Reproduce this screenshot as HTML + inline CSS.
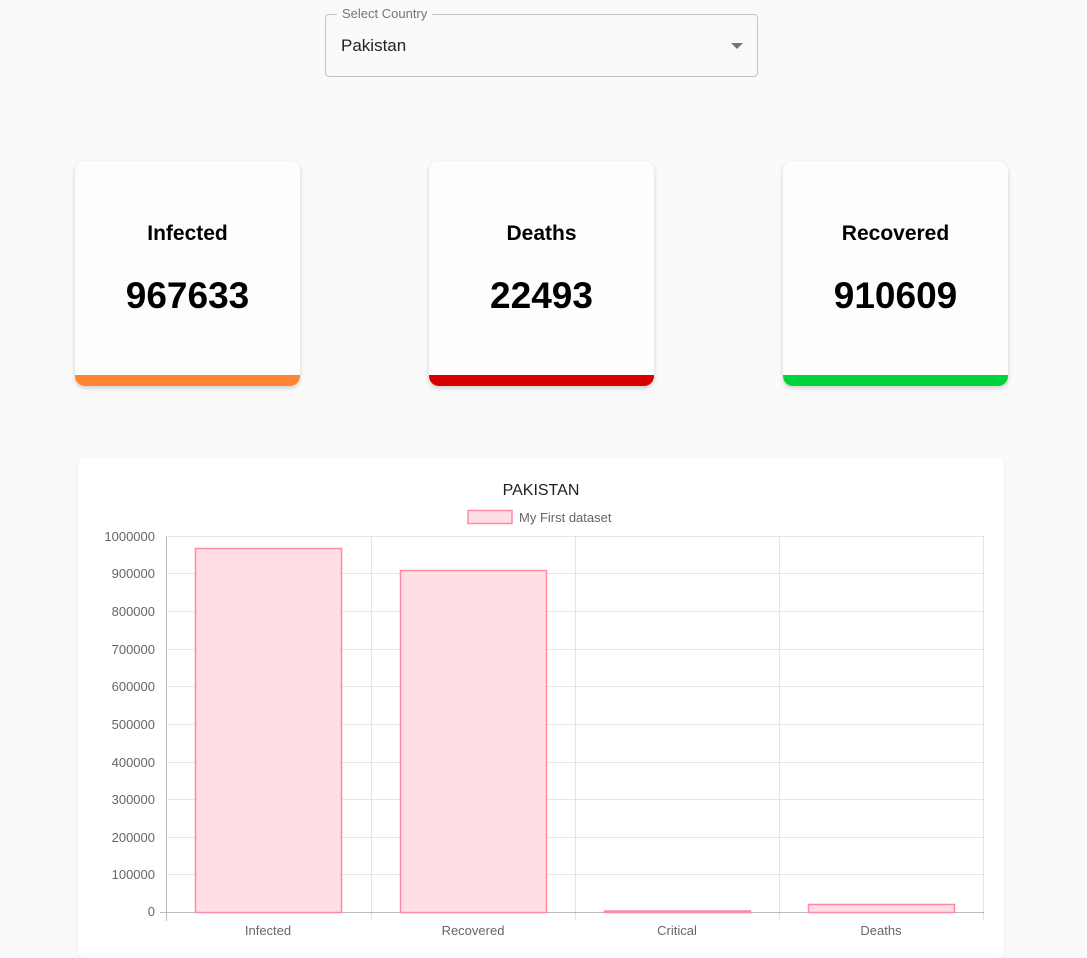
<!DOCTYPE html>
<html><head><style>
body{margin:0;background:#fafafa;font-family:"Liberation Sans",sans-serif;width:1087px;height:938px;overflow:hidden;position:relative}
.sel{position:absolute;left:325px;top:14px;width:431px;height:61px;border:1px solid #c4c4c4;border-radius:4px}
.lab{position:absolute;left:11px;top:-9px;background:#fafafa;padding:0 5px;font-size:13px;color:#757575}
.val{position:absolute;left:15px;top:21px;font-size:17px;color:#222}
.arr{position:absolute;right:14px;top:28px;width:0;height:0;border-left:6px solid transparent;border-right:6px solid transparent;border-top:6px solid #757575}
.card{position:absolute;top:161px;width:225px;height:225px;background:#fdfdfd;border-radius:10px;box-shadow:0 2px 5px rgba(0,0,0,.18);overflow:hidden;text-align:center}
.card h3{margin:0;position:absolute;top:61px;width:100%;font-size:21px;font-weight:bold;color:#000}
.card .n{position:absolute;top:114px;width:100%;font-size:37px;font-weight:bold;color:#000}
.card .b{position:absolute;bottom:0;left:0;right:0;height:11px}
.chart{position:absolute;left:78px;top:458px;width:926px;height:500px;background:#fff;border-radius:6px;box-shadow:0 1px 3px rgba(0,0,0,.08)}
</style></head><body>
<div class="sel"><div class="lab">Select Country</div><div class="val">Pakistan</div><div class="arr"></div></div>
<div class="card" style="left:75px"><h3>Infected</h3><div class="n">967633</div><div class="b" style="background:#fe8533"></div></div>
<div class="card" style="left:429px"><h3>Deaths</h3><div class="n">22493</div><div class="b" style="background:#d60000"></div></div>
<div class="card" style="left:783px"><h3>Recovered</h3><div class="n">910609</div><div class="b" style="background:#00d33a"></div></div>
<div class="chart"></div>
<svg style="position:absolute;left:0;top:0" width="1087" height="938" font-family="Liberation Sans,sans-serif">
<text x="541" y="495" text-anchor="middle" font-size="16" fill="#222">PAKISTAN</text>
<rect x="468" y="510.5" width="44" height="13" fill="#ffdfe5" stroke="#ff8aa3" stroke-width="1.5"/>
<text x="519" y="522" font-size="13" fill="#666">My First dataset</text>
<g stroke="#e5e5e5" stroke-width="1">
<line x1="166" y1="536.5" x2="984" y2="536.5"/><line x1="166" y1="573.5" x2="984" y2="573.5"/><line x1="166" y1="611.5" x2="984" y2="611.5"/><line x1="166" y1="649.5" x2="984" y2="649.5"/><line x1="166" y1="686.5" x2="984" y2="686.5"/><line x1="166" y1="724.5" x2="984" y2="724.5"/><line x1="166" y1="762.5" x2="984" y2="762.5"/><line x1="166" y1="799.5" x2="984" y2="799.5"/><line x1="166" y1="837.5" x2="984" y2="837.5"/><line x1="166" y1="874.5" x2="984" y2="874.5"/>
<line x1="371.5" y1="536" x2="371.5" y2="921"/><line x1="575.5" y1="536" x2="575.5" y2="921"/><line x1="779.5" y1="536" x2="779.5" y2="921"/><line x1="983.5" y1="536" x2="983.5" y2="921"/>
</g>
<line x1="166.5" y1="536" x2="166.5" y2="921" stroke="#bbb"/>
<line x1="160" y1="912.5" x2="984" y2="912.5" stroke="#bbb"/>
<g fill="#666" font-size="13" text-anchor="end">
<text x="155" y="541">1000000</text><text x="155" y="578">900000</text><text x="155" y="616">800000</text><text x="155" y="654">700000</text><text x="155" y="691">600000</text><text x="155" y="729">500000</text><text x="155" y="767">400000</text><text x="155" y="804">300000</text><text x="155" y="842">200000</text><text x="155" y="879">100000</text><text x="155" y="916">0</text>
</g>
<g fill="#ffdfe5" stroke="#ff8aa3" stroke-width="1.5">
<rect x="195.5" y="548.5" width="146" height="364"/>
<rect x="400.5" y="570.5" width="146" height="342"/>
<rect x="604.5" y="911" width="146" height="1.5"/>
<rect x="808.5" y="904.5" width="146" height="8"/>
</g>
<g fill="#666" font-size="13" text-anchor="middle">
<text x="268" y="935">Infected</text><text x="473" y="935">Recovered</text><text x="677" y="935">Critical</text><text x="881" y="935">Deaths</text>
</g>
</svg>
</body></html>
